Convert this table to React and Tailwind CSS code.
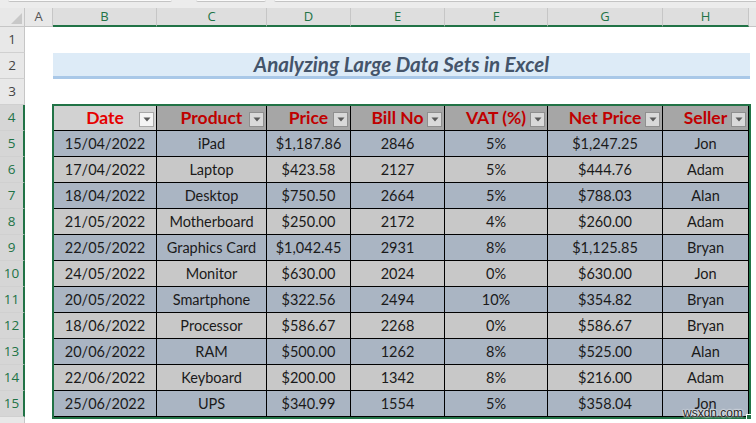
import React from "react";

const COLW = ["w-[28px]", "w-[104px]", "w-[110px]", "w-[84px]", "w-[94px]", "w-[103px]", "w-[115px]", "w-[86px]"];
const LETTERS = ["A", "B", "C", "D", "E", "F", "G", "H"];
const HEADERS = ["Date", "Product", "Price", "Bill No", "VAT (%)", "Net Price", "Seller"];
const ROWS = [
  ["15/04/2022", "iPad", "$1,187.86", "2846", "5%", "$1,247.25", "Jon"],
  ["17/04/2022", "Laptop", "$423.58", "2127", "5%", "$444.76", "Adam"],
  ["18/04/2022", "Desktop", "$750.50", "2664", "5%", "$788.03", "Alan"],
  ["21/05/2022", "Motherboard", "$250.00", "2172", "4%", "$260.00", "Adam"],
  ["22/05/2022", "Graphics Card", "$1,042.45", "2931", "8%", "$1,125.85", "Bryan"],
  ["24/05/2022", "Monitor", "$630.00", "2024", "0%", "$630.00", "Jon"],
  ["20/05/2022", "Smartphone", "$322.56", "2494", "10%", "$354.82", "Bryan"],
  ["18/06/2022", "Processor", "$586.67", "2268", "0%", "$586.67", "Bryan"],
  ["20/06/2022", "RAM", "$500.00", "1262", "8%", "$525.00", "Alan"],
  ["22/06/2022", "Keyboard", "$200.00", "1342", "8%", "$216.00", "Adam"],
  ["25/06/2022", "UPS", "$340.99", "1554", "5%", "$358.04", "Jon"],
];

const ui = { fontFamily: '"Open Sans", "Noto Sans", sans-serif' };
const cal = { fontFamily: 'Lato, "Open Sans", sans-serif' };

function RowHead({ n, selected }) {
  return (
    <div
      className={
        "w-[25px] shrink-0 h-full flex items-center justify-center text-[13.5px] border-b border-[#d0d0d0] " +
        (selected
          ? "bg-[#d6d6d6] text-[#217346] border-r-2 border-r-[#217346]"
          : "bg-[#e8e8e8] text-[#444] border-r border-r-[#c6c6c6]")
      }
      style={ui}
    >
      {n}
    </div>
  );
}

function FilterBtn({ active }) {
  return (
    <div
      className={
        "absolute right-[2px] bottom-[3px] w-[15px] h-[15px] border flex items-center justify-center " +
        (active ? "bg-[#f4f4f4] border-[#a8a8a8]" : "bg-[#d9d9d9] border-[#8f8f8f]")
      }
    >
      <svg width="8" height="5" viewBox="0 0 8 5">
        <path d="M0.5 0.5 L7.5 0.5 L4 4.5 Z" fill="#595959" />
      </svg>
    </div>
  );
}

export default function App() {
  return (
    <div className="relative w-[756px] h-[423px] overflow-hidden bg-white">
      {/* top strip */}
      <div className="h-[8px] bg-[#ececec] flex">
        <div className="ml-[8px] w-[164px] h-[2px] bg-[#fafafa] border-b border-[#c4c4c4] rounded-b-[3px]" />
        <div className="ml-[24px] w-[70px] h-[2px] bg-[#fafafa] border-b border-[#c4c4c4] rounded-b-[3px]" />
        <div className="ml-[8px] flex-1 h-[2px] bg-[#fafafa] border-b border-[#c4c4c4] rounded-bl-[3px]" />
      </div>

      {/* column headers */}
      <div className="flex h-[19px]">
        <div className="relative w-[25px] shrink-0 bg-[#e8e8e8] border-r border-b border-[#c6c6c6]">
          <svg className="absolute right-[2px] bottom-[2px]" width="11" height="11" viewBox="0 0 11 11">
            <path d="M11 0 L11 11 L0 11 Z" fill="#c8c8c8" />
          </svg>
        </div>
        {LETTERS.map((l, i) => (
          <div
            key={l}
            className={
              COLW[i] +
              " shrink-0 flex items-center justify-center text-[13px] border-r border-r-[#c6c6c6] " +
              (i === 0
                ? "bg-[#e8e8e8] text-[#555] border-b border-b-[#c6c6c6]"
                : "bg-[#dedede] text-[#217346] border-b-2 border-b-[#217346]")
            }
            style={ui}
          >
            {l}
          </div>
        ))}
        <div className="flex-1 bg-[#e8e8e8] border-b border-[#c6c6c6]" />
      </div>

      {/* row 1 */}
      <div className="flex h-[26px]">
        <RowHead n={1} />
        <div className="flex-1" />
      </div>

      {/* row 2 title */}
      <div className="flex h-[26px]">
        <RowHead n={2} />
        <div className="w-[28px] shrink-0" />
        <div
          className="w-[697px] shrink-0 bg-[#ddebf7] border-b-[3px] border-[#a9c8e8] flex items-center justify-center text-[20.5px] font-bold italic text-[#44546a] leading-none"
          style={cal}
        >
          Analyzing Large Data Sets in Excel
        </div>
        <div className="flex-1" />
      </div>

      {/* row 3 */}
      <div className="flex h-[26px]">
        <RowHead n={3} />
        <div className="flex-1" />
      </div>

      {/* row 4 header */}
      <div className="flex h-[26px]">
        <RowHead n={4} selected />
        <div className="w-[28px] shrink-0" />
        {HEADERS.map((h, i) => (
          <div
            key={h}
            className={
              COLW[i + 1] +
              " relative shrink-0 flex items-center justify-center text-[17.5px] font-bold border-r border-b border-t border-black leading-none " +
              (i === 0 ? "border-l bg-[#d2d2d2] text-[#e60000]" : "bg-[#a6a6a6] text-[#c00000]")
            }
            style={cal}
          >
            <span className="pb-[1px]">{h}</span>
            <FilterBtn active={i === 0} />
          </div>
        ))}
        <div className="flex-1" />
      </div>

      {/* data rows */}
      {ROWS.map((r, ri) => (
        <div key={ri} className="flex h-[26px]">
          <RowHead n={ri + 5} selected />
          <div className="w-[28px] shrink-0" />
          {r.map((v, ci) => (
            <div
              key={ci}
              className={
                COLW[ci + 1] +
                " shrink-0 flex items-center justify-center text-[14.5px] text-[#1a1a1a] border-r border-b border-black " +
                (ci === 0 ? "border-l " : "") +
                (ri % 2 === 0 ? "bg-[#aab5c3]" : "bg-[#c8c8c8]")
              }
              style={cal}
            >
              {v}
            </div>
          ))}
          <div className="flex-1" />
        </div>
      ))}

      {/* row 16 (partially visible, label hidden below the edge) */}
      <div className="flex h-[26px]">
        <div className="w-[25px] shrink-0 h-full bg-[#e8e8e8] border-r border-[#c6c6c6]" />
        <div className="flex-1" />
      </div>

      {/* selection rectangle */}
      <div className="absolute left-[52px] top-[104px] w-[699px] h-[315px] border-2 border-[#217346] pointer-events-none" />
      <div className="absolute left-[746px] top-[414px] w-[6px] h-[6px] bg-[#217346] border border-white" />

      {/* watermark */}
      <div
        className="absolute left-[683px] top-[404px] text-[12px] text-[#222] [text-shadow:0_0_2px_#fff,0_0_2px_#fff]"
        style={{ fontFamily: '"Liberation Sans", Arial, sans-serif' }}
      >
        wsxdn.com
      </div>
    </div>
  );
}
